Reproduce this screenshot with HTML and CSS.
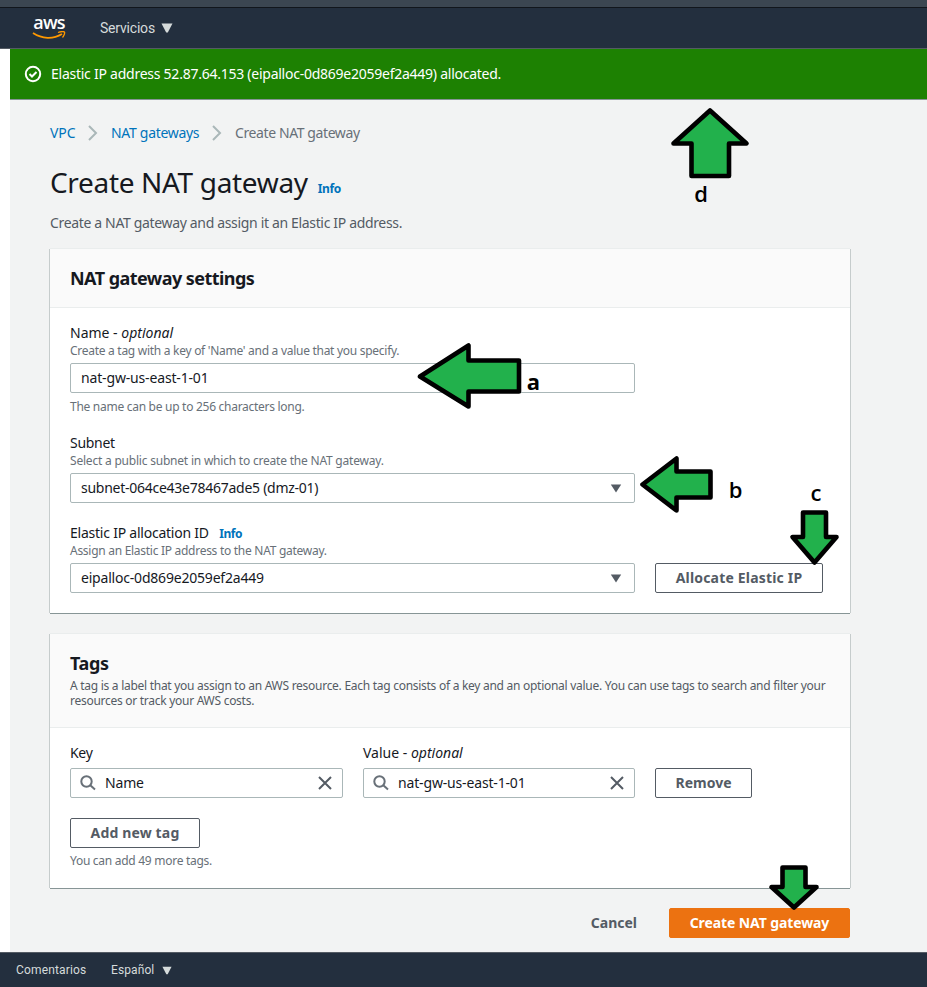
FILE: index.html
```html
<!DOCTYPE html>
<html lang="es">
<head>
<meta charset="utf-8">
<title>Create NAT gateway</title>
<link rel="stylesheet" href="styles.css">
</head>
<body>
<div class="strip"></div>
<header class="nav">
  <div class="logo">
    <span class="logo-text">aws</span>
    <svg class="smile" width="34" height="9" viewBox="0 0 34 9"><path d="M1 2C10 8 21 8.500 30 3" fill="none" stroke="#f90" stroke-width="1.800"/><path d="M26 1.500C29 .5 32 .5 32.500 1.200C33 2 32 5 30.500 6.500" fill="none" stroke="#f90" stroke-width="1.300"/></svg>
  </div>
  <span class="nav-item">Servicios</span>
  <svg class="caret" width="12" height="10" viewBox="0 0 12 10"><path d="M.5.5h11L6.800 9.500H5.200z"/></svg>
</header>

<div class="page">
  <div class="flash">
    <svg width="18" height="18" viewBox="0 0 18 18" fill="none" stroke="#fff" stroke-width="2"><circle cx="9" cy="9" r="7.200"/><path d="M5.500 9l2.500 2.500 4.500-4.500"/></svg>
    <span class="flash-text">Elastic IP address 52.87.64.153 (eipalloc-0d869e2059ef2a449) allocated.</span>
  </div>
  <main class="content">
    <nav class="crumbs">
      <a class="crumb-vpc">VPC</a>
      <svg width="10" height="16" viewBox="0 0 10 16"><path d="M1 1l7 7-7 7"/></svg>
      <a class="crumb-nat">NAT gateways</a>
      <svg width="10" height="16" viewBox="0 0 10 16"><path d="M1 1l7 7-7 7"/></svg>
      <span class="crumb-now">Create NAT gateway</span>
    </nav>
    <div class="title"><h1>Create NAT gateway</h1><a class="info">Info</a></div>
    <p class="subtitle">Create a NAT gateway and assign it an Elastic IP address.</p>

    <section class="card settings">
      <div class="card-head"><h2 class="h-settings">NAT gateway settings</h2></div>
      <div class="card-body">
        <div class="field named">
          <div class="label l-opt">Name - <i>optional</i></div>
          <div class="desc d-name">Create a tag with a key of 'Name' and a value that you specify.</div>
          <div class="input"><span class="v-nat">nat-gw-us-east-1-01</span></div>
          <div class="hint h-name">The name can be up to 256 characters long.</div>
        </div>
        <div class="field">
          <div class="label">Subnet</div>
          <div class="desc d-sub">Select a public subnet in which to create the NAT gateway.</div>
          <div class="input"><span class="v-sub">subnet-064ce43e78467ade5 (dmz-01)</span><svg class="drop" width="12" height="9" viewBox="0 0 12 9"><path d="M.8.5h10.400L6 8.500z"/></svg></div>
        </div>
        <div class="row">
          <div class="field last">
            <div class="label"><span class="l-eip">Elastic IP allocation ID</span> <a class="info small">Info</a></div>
            <div class="desc d-eip">Assign an Elastic IP address to the NAT gateway.</div>
            <div class="input"><span class="v-eip">eipalloc-0d869e2059ef2a449</span><svg class="drop" width="12" height="9" viewBox="0 0 12 9"><path d="M.8.5h10.400L6 8.500z"/></svg></div>
          </div>
          <button class="btn allocate">Allocate Elastic IP</button>
        </div>
      </div>
    </section>

    <section class="card tags">
      <div class="card-head">
        <h2>Tags</h2>
        <div class="tag-desc">A tag is a label that you assign to an AWS resource. Each tag consists of a key and an optional value. You can use tags to search and filter your<br>resources or track your AWS costs.</div>
      </div>
      <div class="card-body">
        <div class="row tag-row">
          <div class="tag-field key">
            <div class="label">Key</div>
            <div class="input"><svg class="search" width="16" height="16" viewBox="0 0 16 16"><circle cx="6.500" cy="6.500" r="5.200"/><path d="M10.300 10.300L15 14.500"/></svg><span>Name</span><svg class="clear" width="14" height="14" viewBox="0 0 14 14"><path d="M1 1l12 12M13 1L1 13"/></svg></div>
          </div>
          <div class="tag-field val">
            <div class="label l-opt">Value - <i>optional</i></div>
            <div class="input"><svg class="search" width="16" height="16" viewBox="0 0 16 16"><circle cx="6.500" cy="6.500" r="5.200"/><path d="M10.300 10.300L15 14.500"/></svg><span class="v-nat">nat-gw-us-east-1-01</span><svg class="clear" width="14" height="14" viewBox="0 0 14 14"><path d="M1 1l12 12M13 1L1 13"/></svg></div>
          </div>
          <button class="btn remove">Remove</button>
        </div>
        <button class="btn add">Add new tag</button>
        <div class="hint h-tags">You can add 49 more tags.</div>
      </div>
    </section>

    <div class="actions">
      <a class="cancel">Cancel</a>
      <button class="btn primary">Create NAT gateway</button>
    </div>
  </main>
</div>

<footer class="foot">
  <span class="f-com">Comentarios</span>
  <span class="f-esp">Español</span>
  <svg class="caret" width="10" height="9" viewBox="0 0 12 10"><path d="M.5.5h11L6.800 9.500H5.200z"/></svg>
</footer>

<svg class="marks" width="927" height="987" viewBox="0 0 927 987">
  <g class="arrows">
    <path d="M710 110.500L746.500 143.500H729V176H691.500V143.500H673.500z"/>
    <path d="M420 376.500L468.500 345.500V360.500H519V391.500H468.500V406.500z"/>
    <path d="M642.500 484.500L676.500 458.500V471.500H710.500V497.500H676.500V510.500z"/>
    <path d="M803 512.500H826V537H836.500L814.500 562.500L792.500 537H803z"/>
    <path d="M782.500 867.500H805.500V887H816.500L794 907.500L771.500 887H782.500z"/>
  </g>
  <text class="letter" x="701" y="202">d</text>
  <text class="letter bold" x="533.500" y="390">a</text>
  <text class="letter" x="735.500" y="497.500">b</text>
  <text class="letter" x="816" y="501">c</text>
</svg>
</body>
</html>
```
FILE: styles.css
```css
* { box-sizing: border-box; }
body { margin: 0; width: 927px; height: 987px; overflow: hidden; position: relative; background: #fff; color: #16191f; font: 14px/20px "Noto Sans", sans-serif; }
svg { flex: none; }
h1, h2, p { margin: 0; }
.strip { height: 8px; background: #3b4651; border-bottom: 1px solid #11161c; }
.nav { height: 41px; background: #232f3e; border-bottom: 1px solid #545b64; display: flex; align-items: center; padding-left: 32px; color: #d5dbdb; font-family: Roboto, sans-serif; }
.logo { width: 34px; height: 24px; margin-right: 34px; display: flex; flex-direction: column; }
.logo-text { height: 15px; font: 600 18px/13px "Open Sans", sans-serif; color: #fff; text-align: center; letter-spacing: -.8px; }
.nav-item { width: 55px; white-space: nowrap; letter-spacing: -.2px; }
.caret { fill: #d5dbdb; margin-left: 6px; }
.page { margin-left: 10px; height: 903px; background: #f2f3f3; }
.flash { height: 51px; background: #1d8102; border-bottom: 1px solid #879596; display: flex; align-items: center; padding-left: 14px; gap: 9px; color: #fff; }
.flash-text, .crumbs > *, .subtitle, .desc, .hint, .tag-desc, h1, h2, .input span { white-space: nowrap; }
.flash-text { letter-spacing: -.25px; }
.content { width: 800px; margin-left: 40px; padding-top: 23px; }
.crumbs { display: flex; align-items: center; height: 20px; color: #687078; }
.crumbs svg { fill: none; stroke: #aab7b8; stroke-width: 2; }
.crumb-vpc { width: 38px; letter-spacing: -.1px; }
.crumb-nat { width: 101px; margin-left: 13px; letter-spacing: -.3px; }
.crumb-now { margin-left: 13px; letter-spacing: -.4px; }
a { color: #0073bb; }
.title { display: flex; align-items: baseline; height: 36px; margin-top: 21px; }
h1 { font-size: 28px; line-height: 36px; font-weight: 400; letter-spacing: -.33px; }
.info { font-size: 12px; font-weight: 700; margin-left: 10px; letter-spacing: -.4px; }
.info.small { margin-left: 7px; }
.l-eip { letter-spacing: -.23px; }
.subtitle { color: #545b64; margin: 13px 0 16px; letter-spacing: -.34px; }
.card { background: #fff; box-shadow: 0 0 0 1px #d5dbdb, 0 1px 1px 0 #00000020; border-bottom: 1px solid #c8cfcf; }
.card { box-shadow: inset 0 0 0 0 #fff, 0 1px 0 0 #879596, 1px 0 0 0 #c6cccc, -1px 0 0 0 #c6cccc, 0 -1px 0 0 #eaeded; border-bottom: 0; }
.settings { height: 364px; }
.card-head { background: #fafafa; border-bottom: 1px solid #eaeded; padding: 18px 20px 0; }
.settings .card-head { height: 59px; }
h2 { font-size: 18px; line-height: 22px; letter-spacing: -.4px; }
.h-settings { letter-spacing: -.55px; }
.card-body { padding: 15px 20px 0; }
.label { height: 20px; white-space: nowrap; letter-spacing: -.3px; }
.l-opt { letter-spacing: 0; }
.desc, .hint { color: #687078; font-size: 12px; line-height: 15px; letter-spacing: -.28px; }
.d-sub { letter-spacing: -.21px; }
.input { height: 30px; border: 1px solid #aab7b8; border-radius: 2px; background: #fff; display: flex; align-items: center; padding: 0 10px; }
.field { width: 565px; height: 90px; }
.field.named { height: 110px; }
.named .hint { margin-top: 6px; }
.field .input { margin-top: 5px; }
.v-nat { letter-spacing: -.16px; }
.v-sub { letter-spacing: -.26px; }
.v-eip { letter-spacing: -.2px; }
.drop { margin-left: auto; margin-right: 2px; fill: #545b64; }
.row { display: flex; gap: 20px; align-items: flex-start; }
.btn { height: 30px; border: 1px solid #545b64; border-radius: 2px; background: #fff; color: #545b64; padding: 0; font: 700 14px/20px "Noto Sans", sans-serif; white-space: nowrap; display: block; }
.allocate { width: 168px; margin-top: 40px; letter-spacing: .18px; }
.tags { height: 254px; margin-top: 21px; }
.tags .card-head { height: 94px; padding-top: 18px; }
.tag-desc { font-size: 12px; line-height: 15px; color: #545b64; margin-top: 4px; letter-spacing: -.275px; }
.tags .card-body { padding-top: 15px; }
.key { width: 273px; }
.val { width: 272px; }
.tag-field .input { margin-top: 5px; }
.search { fill: none; stroke: #687078; stroke-width: 2; margin-left: -1px; margin-right: 9px; }
.clear { fill: none; stroke: #545b64; stroke-width: 2; margin-left: auto; }
.tag-field .input span { letter-spacing: -.16px; }
.remove { width: 97px; margin-top: 25px; }
.add { width: 130px; margin-top: 20px; letter-spacing: .15px; }
.h-tags { margin-top: 5px; }
.actions { display: flex; justify-content: flex-end; align-items: center; margin-top: 20px; }
.cancel { font-weight: 700; color: #545b64; margin-right: 32px; }
.primary { width: 181px; background: #ec7211; border-color: #ec7211; color: #fff; letter-spacing: -.1px; }
.foot { height: 35px; background: #232f3e; border-top: 1px solid #545b64; color: #d5dbdb; display: flex; align-items: center; padding-left: 16px; font: 12px/16px Roboto, sans-serif; }
.f-com { width: 95px; letter-spacing: .15px; }
.f-esp { width: 45px; letter-spacing: .1px; }
.marks { position: absolute; left: 0; top: 0; pointer-events: none; }
.arrows { fill: #22b14c; stroke: #000; stroke-width: 4.6; stroke-linejoin: round; }
.letter { font: 600 22px "Open Sans", sans-serif; text-anchor: middle; }
.bold { font-weight: 700; }
```
